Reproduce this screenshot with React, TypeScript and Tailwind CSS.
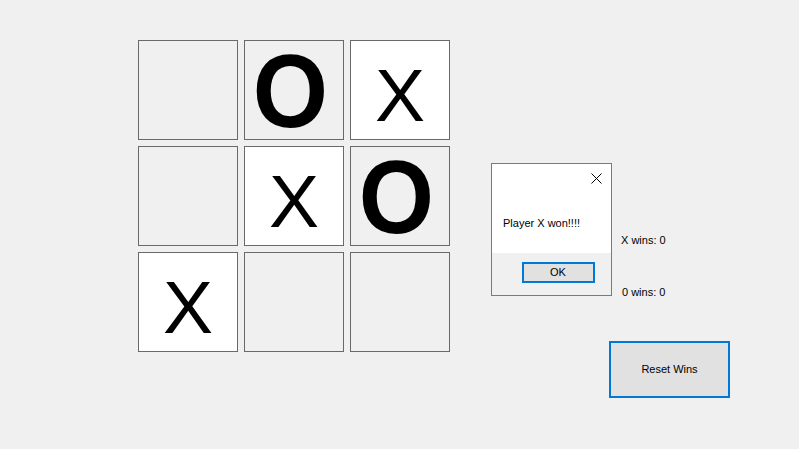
const board: (string | null)[] = [null, "O", "X", null, "X", "O", "X", null, null];

function Cell({ mark }: { mark: string | null }) {
  const isX = mark === "X";
  const isO = mark === "O";
  return (
    <div
      className={`w-[100px] h-[100px] border border-[#696969] flex items-center justify-center leading-none text-black ${
        isX ? "bg-white text-[75px] pt-[10px]" : "bg-[#f0f0f0]"
      }`}
    >
      {isO ? (
        <span className="text-[104px] font-bold scale-x-[0.93] mr-[8px] mt-[2px]">O</span>
      ) : (
        mark
      )}
    </div>
  );
}

export default function App() {
  return (
    <div
      className="relative w-[799px] h-[449px] bg-[#f0f0f0] overflow-hidden flex text-black"
      style={{ fontFamily: '"Liberation Sans", Arial, sans-serif' }}
    >
      <div className="ml-[138px] mt-[40px] grid grid-cols-[100px_100px_100px] gap-[6px] self-start">
        {board.map((mark, i) => (
          <Cell key={i} mark={mark} />
        ))}
      </div>

      <div className="ml-[159px] flex flex-col text-[11px]">
        <div className="mt-[233px] pl-[12px] h-[14px] leading-[14px]">X wins: 0</div>
        <div className="mt-[38px] pl-[13px] h-[14px] leading-[14px]">0 wins: 0</div>
        <button
          type="button"
          className="mt-[42px] w-[121px] h-[57px] border-2 border-[#0078d7] bg-[#e1e1e1] text-[11px]"
        >
          Reset Wins
        </button>
      </div>

      {/* message box */}
      <div className="absolute left-[491px] top-[163px] w-[121px] h-[133px] border border-[#7a7a7a] bg-[#f0f0f0] flex flex-col">
        <div className="bg-white h-[89px] relative">
          <svg
            className="absolute left-[99px] top-[9px]"
            width="11"
            height="11"
            viewBox="0 0 11 11"
          >
            <path d="M0.5 0.5 L10.5 10.5 M10.5 0.5 L0.5 10.5" stroke="#000" strokeWidth="1" />
          </svg>
          <div className="absolute left-[11px] top-[52px] text-[11px] leading-[14px]">
            Player X won!!!!
          </div>
        </div>
        <div className="flex justify-center pl-[13px] pt-[9px]">
          <button
            type="button"
            className="w-[73px] h-[21px] border-2 border-[#0078d7] bg-[#e1e1e1] text-[11px] leading-none"
          >
            OK
          </button>
        </div>
      </div>
    </div>
  );
}
